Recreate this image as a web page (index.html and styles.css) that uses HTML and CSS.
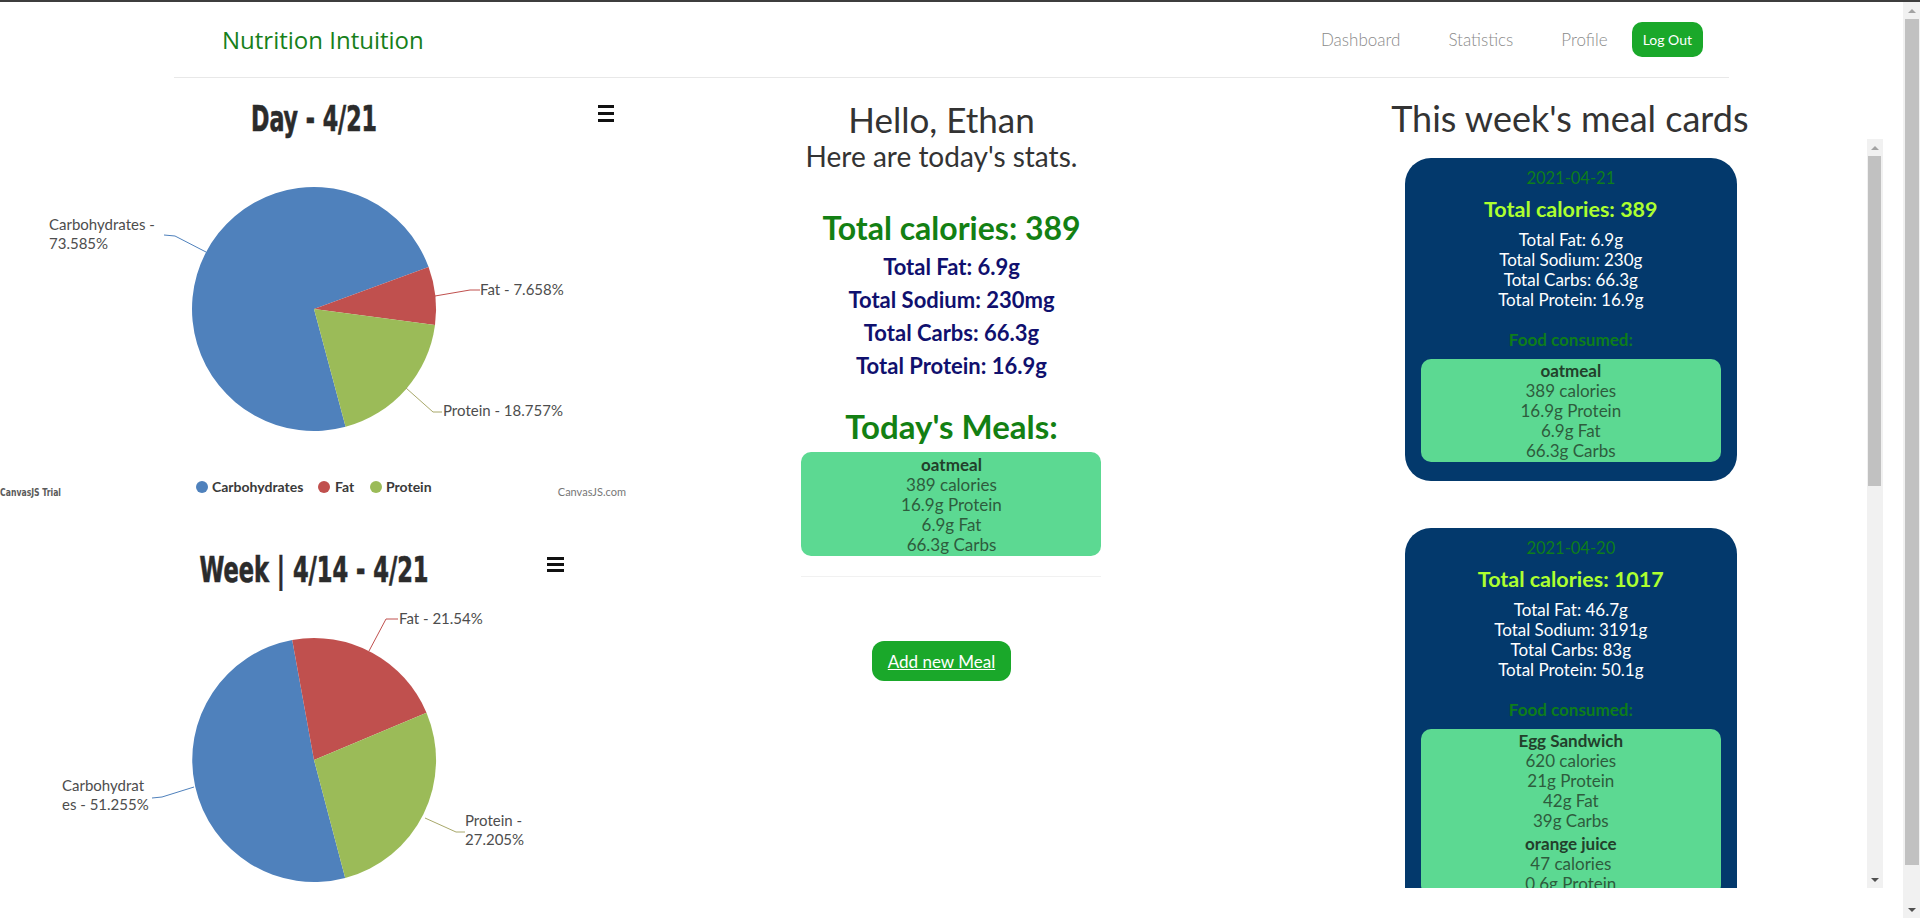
FILE: index.html
```html
<!DOCTYPE html>
<html lang="en">
<head>
<meta charset="utf-8">
<title>Nutrition Intuition</title>
<link rel="stylesheet" href="styles.css">
</head>
<body>
<div class="frame-top"></div>
<div class="shell">
<div class="page">
<header class="navbar">
  <a class="brand">Nutrition Intuition</a>
  <nav class="nav">
    <a class="nav-link">Dashboard</a>
    <a class="nav-link">Statistics</a>
    <a class="nav-link">Profile</a>
    <a class="btn-logout">Log Out</a>
  </nav>
</header>

<main class="row">
  <section class="col col-charts">
    <svg class="chart" viewBox="0 0 634 430" width="634" height="430">
      <text class="ctitle" transform="translate(314 51) scale(1 1.1)" text-anchor="middle" textLength="126" lengthAdjust="spacingAndGlyphs">Day - 4/21</text>
      <g class="menu">
        <rect x="598" y="25" width="16" height="3"/>
        <rect x="598" y="32" width="16" height="3"/>
        <rect x="598" y="39" width="16" height="3"/>
      </g>
      <path class="s-carb" d="M314 229 L345.6 346.8 A122 122 0 1 1 428.6 187.1 Z"/>
      <path class="s-fat" d="M314 229 L428.6 187.1 A122 122 0 0 1 435 244.9 Z"/>
      <path class="s-pro" d="M314 229 L435 244.9 A122 122 0 0 1 345.6 346.8 Z"/>
      <polyline class="l-carb" points="164,155 175,156 206,172"/>
      <polyline class="l-fat" points="435,216 470,210 480,210"/>
      <polyline class="l-pro" points="406,308 433,332 442,332"/>
      <text class="clabel" x="49" y="150">Carbohydrates -</text>
      <text class="clabel" x="49" y="169">73.585%</text>
      <text class="clabel" x="480" y="215">Fat - 7.658%</text>
      <text class="clabel" x="443" y="336">Protein - 18.757%</text>
      <circle class="s-carb" cx="202" cy="407" r="6"/>
      <text class="clegend" x="212" y="412">Carbohydrates</text>
      <circle class="s-fat" cx="324" cy="407" r="6"/>
      <text class="clegend" x="335" y="412">Fat</text>
      <circle class="s-pro" cx="376" cy="407" r="6"/>
      <text class="clegend" x="386" y="412">Protein</text>
      <text class="ctrial" x="0" y="416" textLength="61" lengthAdjust="spacingAndGlyphs">CanvasJS Trial</text>
      <text class="ccredit" x="626" y="416" text-anchor="end">CanvasJS.com</text>
    </svg>

    <svg class="chart chart-week" viewBox="0 0 634 389" width="634" height="389">
      <text class="ctitle" transform="translate(314 53) scale(1 1.1)" text-anchor="middle" textLength="229" lengthAdjust="spacingAndGlyphs">Week | 4/14 - 4/21</text>
      <g class="menu">
        <rect x="547" y="28" width="17" height="3"/>
        <rect x="547" y="34" width="17" height="3"/>
        <rect x="547" y="40" width="17" height="3"/>
      </g>
      <path class="s-carb" d="M314 231 L345.2 349 A122 122 0 1 1 292.2 111 Z"/>
      <path class="s-fat" d="M314 231 L292.2 111 A122 122 0 0 1 426.5 183.7 Z"/>
      <path class="s-pro" d="M314 231 L426.5 183.7 A122 122 0 0 1 345.2 349 Z"/>
      <polyline class="l-fat" points="369,122 386,90 398,90"/>
      <polyline class="l-carb" points="152,269 162,268 194,258"/>
      <polyline class="l-pro" points="425,289 456,303 465,303"/>
      <text class="clabel" x="399" y="95">Fat - 21.54%</text>
      <text class="clabel" x="62" y="262">Carbohydrat</text>
      <text class="clabel" x="62" y="281">es - 51.255%</text>
      <text class="clabel" x="465" y="297">Protein -</text>
      <text class="clabel" x="465" y="316">27.205%</text>
    </svg>
  </section>

  <section class="col col-today">
    <h2 class="hello shift">Hello, Ethan</h2>
    <h3 class="sub shift">Here are today's stats.</h3>
    <div class="total-cal">Total calories: 389</div>
    <div class="stats">
      <div class="stat">Total Fat: 6.9g</div>
      <div class="stat">Total Sodium: 230mg</div>
      <div class="stat">Total Carbs: 66.3g</div>
      <div class="stat">Total Protein: 16.9g</div>
    </div>
    <div class="meals-title">Today's Meals:</div>
    <div class="meal">
      <div class="food">
        <div class="food-name">oatmeal</div>
        <div>389 calories</div>
        <div>16.9g Protein</div>
        <div>6.9g Fat</div>
        <div>66.3g Carbs</div>
      </div>
    </div>
    <div class="divider"></div>
    <a class="btn-add shift">Add new Meal</a>
  </section>

  <section class="col col-week">
    <h2 class="week-title">This week's meal cards</h2>
    <div class="scroll-area">
      <div class="scroll-content">
        <div class="card">
          <div class="card-date">2021-04-21</div>
          <div class="card-cal">Total calories: 389</div>
          <div class="card-stats">
            <div>Total Fat: 6.9g</div>
            <div>Total Sodium: 230g</div>
            <div>Total Carbs: 66.3g</div>
            <div>Total Protein: 16.9g</div>
          </div>
          <div class="card-food-title">Food consumed:</div>
          <div class="foods">
            <div class="food">
              <div class="food-name">oatmeal</div>
              <div>389 calories</div>
              <div>16.9g Protein</div>
              <div>6.9g Fat</div>
              <div>66.3g Carbs</div>
            </div>
          </div>
        </div>

        <div class="card">
          <div class="card-date">2021-04-20</div>
          <div class="card-cal">Total calories: 1017</div>
          <div class="card-stats">
            <div>Total Fat: 46.7g</div>
            <div>Total Sodium: 3191g</div>
            <div>Total Carbs: 83g</div>
            <div>Total Protein: 50.1g</div>
          </div>
          <div class="card-food-title">Food consumed:</div>
          <div class="foods">
            <div class="food">
              <div class="food-name">Egg Sandwich</div>
              <div>620 calories</div>
              <div>21g Protein</div>
              <div>42g Fat</div>
              <div>39g Carbs</div>
            </div>
            <div class="food">
              <div class="food-name">orange juice</div>
              <div>47 calories</div>
              <div>0.6g Protein</div>
            </div>
          </div>
        </div>
      </div>
      <div class="vscroll vscroll-inner">
        <div class="vs-btn vs-up"></div>
        <div class="vs-track"><div class="vs-thumb"></div></div>
        <div class="vs-btn vs-down"></div>
      </div>
    </div>
  </section>
</main>
</div>
<div class="vscroll vscroll-page">
  <div class="vs-btn vs-up"></div>
  <div class="vs-track"><div class="vs-thumb"></div></div>
  <div class="vs-btn vs-down"></div>
</div>
</div>
</body>
</html>
```

FILE: styles.css
```css
* { box-sizing: border-box; }
html, body { margin: 0; }
body {
  font-family: Lato, "Open Sans", sans-serif;
  color: #333;
  background: #fff;
  overflow: hidden;
}

.frame-top { height: 2px; background: #3d3d3d; }

.shell {
  display: flex;
  align-items: flex-start;
}
.page { width: 1903px; flex: none; }

/* drawn scrollbars */
.vscroll {
  display: flex;
  flex-direction: column;
  background: #f1f1f1;
  flex: none;
}
.vscroll-page { width: 17px; height: 916px; }
.vs-btn {
  height: 17px;
  flex: none;
  display: flex;
  align-items: center;
  justify-content: center;
}
.vs-up::before {
  content: "";
  border-left: 4px solid transparent;
  border-right: 4px solid transparent;
  border-bottom: 4px solid #a3a3a3;
}
.vs-down::before {
  content: "";
  border-left: 4px solid transparent;
  border-right: 4px solid transparent;
  border-top: 4px solid #505050;
}
.vs-track { flex: 1; padding: 0 1.5px; }
.vs-thumb { background: #c1c1c1; }
.vscroll-page .vs-thumb { height: 846px; }
.vscroll-inner { width: 16px; height: 749px; }
.vscroll-inner .vs-thumb { height: 330px; }

/* navbar */
.navbar {
  width: 1555px;
  margin: 0 auto;
  height: 76px;
  border-bottom: 1px solid #e8e8e8;
  display: flex;
  align-items: center;
  justify-content: space-between;
  padding: 0 26px 0 48px;
}
.brand {
  font-family: "Open Sans", Lato, sans-serif;
  font-size: 24px;
  color: #17801a;
  text-decoration: none;
}
.nav { display: flex; align-items: center; }
.nav-link {
  font-size: 17px;
  font-weight: 300;
  color: #8a8a8a;
  padding: 0 24px;
}
.btn-logout {
  background: #1aa82a;
  color: #fff;
  font-size: 14px;
  border-radius: 10px;
  height: 35px;
  padding: 0 11px;
  display: flex;
  align-items: center;
}

/* layout */
.row {
  display: grid;
  grid-template-columns: repeat(3, 1fr);
}
.col { min-width: 0; }

/* charts */
.col-charts { padding-top: 2px; }
.chart { display: block; width: 634px; height: 430px; }
.chart-week { margin-top: 19px; height: 389px; }
.ctitle {
  font-family: "DejaVu Sans Condensed", "DejaVu Sans", sans-serif;
  font-weight: 700;
  font-size: 33px;
  fill: #2b2b2b;
  stroke: #2b2b2b;
  stroke-width: 0.6px;
}
.menu rect { fill: #111; }
.s-carb { fill: #4f81bc; }
.s-fat { fill: #c0504e; }
.s-pro { fill: #9bbb58; }
.l-carb, .l-fat, .l-pro { fill: none; stroke-width: 1px; }
.l-carb { stroke: #4f81bc; }
.l-fat { stroke: #c0504e; }
.l-pro { stroke: #a8a86a; }
.clabel {
  font-family: Lato, sans-serif;
  font-size: 15px;
  fill: #4d4d4d;
}
.clegend {
  font-family: Lato, sans-serif;
  font-weight: 700;
  font-size: 14px;
  fill: #3a3a3a;
}
.ctrial {
  font-family: "DejaVu Sans Condensed", "DejaVu Sans", sans-serif;
  font-weight: 700;
  font-size: 10px;
  fill: #5a5a5a;
}
.ccredit {
  font-family: Lato, sans-serif;
  font-size: 11px;
  fill: #777;
}

/* today */
.col-today {
  display: flex;
  flex-direction: column;
  align-items: center;
  text-align: center;
}
.shift { margin-right: 20px; }
.hello {
  font-size: 35px;
  font-weight: 400;
  line-height: 40px;
  margin-top: 21px;
  margin-bottom: 0;
  color: #333;
}
.sub {
  font-size: 28px;
  font-weight: 400;
  line-height: 34px;
  margin-top: 0;
  margin-bottom: 0;
  color: #333;
}
.total-cal {
  font-size: 32px;
  font-weight: 700;
  color: #138013;
  line-height: 40px;
  margin-top: 35px;
}
.stats { margin-top: 2px; }
.stat {
  font-size: 22px;
  font-weight: 700;
  color: #10106e;
  line-height: 33px;
}
.meals-title {
  font-size: 33px;
  font-weight: 700;
  color: #138013;
  line-height: 40px;
  margin-top: 24px;
}
.meal {
  width: 300px;
  background: #5cd992;
  border-radius: 10px;
  margin-top: 6px;
  padding: 3px 0 1px;
}
.food {
  font-size: 17px;
  line-height: 20px;
  color: #2e5c3d;
}
.food-name { font-weight: 700; color: #22402b; }
.divider {
  width: 300px;
  border-top: 1px solid #f1f1f1;
  margin-top: 20px;
}
.btn-add {
  margin-top: 64px;
  width: 139px;
  height: 40px;
  border-radius: 12px;
  background: #1aa82a;
  color: #fff;
  font-size: 17px;
  text-decoration: underline;
  display: flex;
  align-items: center;
  justify-content: center;
}

/* week */
.col-week {
  padding-right: 20px;
  display: flex;
  flex-direction: column;
}
.week-title {
  font-size: 36px;
  font-weight: 400;
  line-height: 42px;
  text-align: center;
  margin: 19px 12px 0 0;
  color: #333;
}
.scroll-area {
  height: 749px;
  display: flex;
}
.scroll-content {
  flex: 1;
  min-width: 0;
  overflow: hidden;
  padding-left: 6px;
}
.card {
  width: 332px;
  margin: 19px auto 47px;
  background: #03396c;
  border-radius: 26px;
  padding: 10px 16px 19px;
  text-align: center;
  color: #fff;
}
.card-date {
  font-size: 16.5px;
  line-height: 20px;
  color: #0e7d1a;
}
.card-cal {
  font-size: 21.5px;
  font-weight: 700;
  line-height: 28px;
  color: #adff2f;
  margin-top: 7px;
}
.card-stats {
  margin-top: 7px;
  font-size: 17px;
  line-height: 20px;
}
.card-food-title {
  margin-top: 20px;
  font-size: 17px;
  font-weight: 700;
  line-height: 20px;
  color: #0e7d1a;
}
.foods {
  margin-top: 9px;
  background: #5cd992;
  border-radius: 10px;
  padding: 2px 0 1px;
}
.food + .food { margin-top: 3px; }
```
